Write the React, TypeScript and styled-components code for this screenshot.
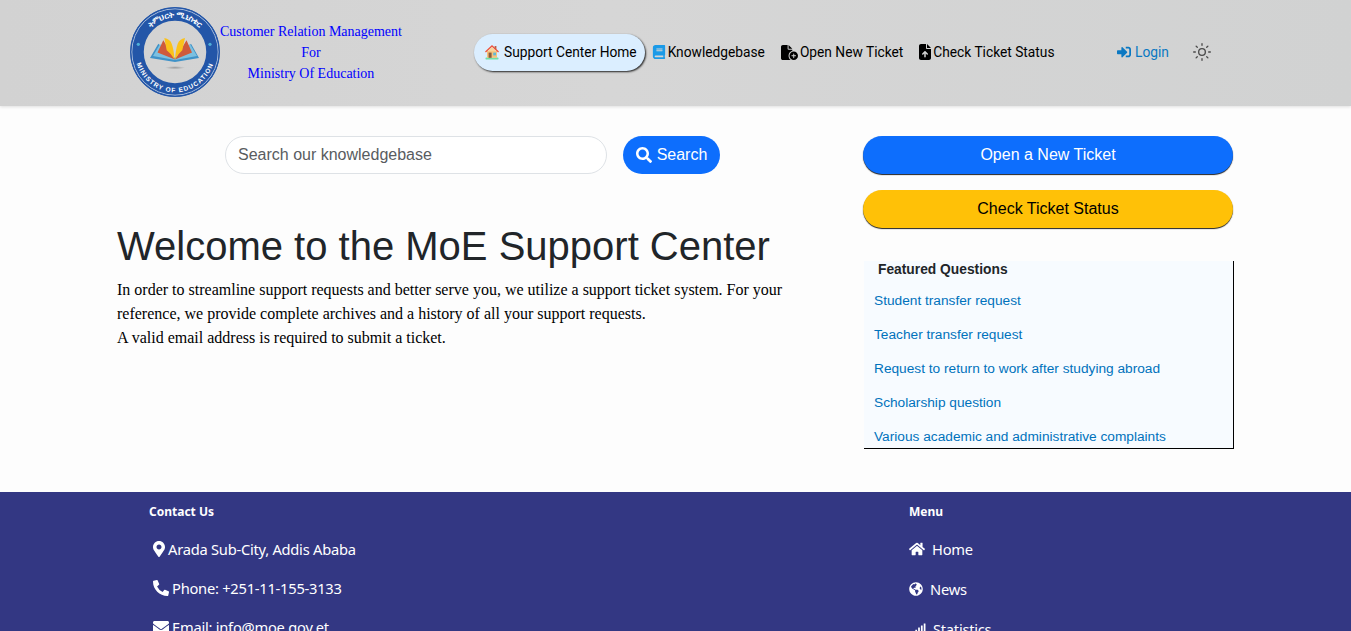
import React from "react";
import styled, { createGlobalStyle } from "styled-components";
import {
    FaBook,
    FaEnvelope,
    FaGlobeAmericas,
    FaHome,
    FaMapMarkerAlt,
    FaPhoneAlt,
    FaSearch,
    FaSignal,
    FaSignInAlt,
} from "react-icons/fa";
import { FaFileArrowUp, FaFileCirclePlus } from "react-icons/fa6";
import { Sun } from "lucide-react";

const GlobalStyle = createGlobalStyle`
    html, body {
        margin: 0;
        height: 100%;
        overflow: hidden;
    }
    body {
        background: #fdfdfd;
        font-family: "Liberation Sans", Arial, sans-serif;
    }
`;

const Page = styled.div`
    height: 100vh;
    overflow: hidden;
`;

const Header = styled.header`
    height: 106px;
    display: flex;
    align-items: center;
    padding: 0 0 2px 129px;
    box-sizing: border-box;
    background: linear-gradient(90deg, #d2d2d2, #d6d6d6 45%, #d1d2d2);
    box-shadow: 0 1px 3px rgba(0, 0, 0, 0.12);
`;

const Brand = styled.div`
    display: flex;
    align-items: center;
    width: 345px;
    flex: none;
`;

const BrandText = styled.div`
    width: 182px;
    margin-left: -1px;
    text-align: center;
    color: #0000ff;
    font-family: "Liberation Serif", "Times New Roman", serif;
    font-size: 14px;
    line-height: 21px;
`;

const Nav = styled.nav`
    display: flex;
    align-items: center;
    font-family: Roboto, sans-serif;
    font-size: 13.75px;
    color: #000;
    width: 643px;
    flex: none;
`;

const NavItem = styled.a<{ $active?: boolean }>`
    display: flex;
    align-items: center;
    gap: ${(p) => (p.$active ? "4px" : "3px")};
    height: 37px;
    box-sizing: border-box;
    white-space: nowrap;
    padding: 0 8px 0 ${(p) => (p.$active ? "10px" : "8px")};
    border-radius: 20px;
    background: ${(p) => (p.$active ? "#dbeeff" : "transparent")};
    box-shadow: ${(p) => (p.$active ? "1px 1px 2px #222" : "none")};
    svg {
        flex: none;
    }
`;

const BookIcon = styled(FaBook)`
    margin: 0 -1px;
`;

const NewTicketIcon = styled(FaFileCirclePlus)`
    margin-right: -1px;
`;

const StatusIcon = styled(FaFileArrowUp)`
    margin: 0 -3px 0 -2px;
`;

const LoginLink = styled.a`
    display: flex;
    align-items: center;
    gap: 4px;
    color: #0a78c2;
    font-family: Roboto, sans-serif;
    font-size: 13.75px;
`;

const ThemeToggle = styled.span`
    display: flex;
    margin-left: 23px;
    color: #4a4a4a;
`;

const Main = styled.main`
    height: 386px;
    display: grid;
    grid-template-columns: 711px 370px;
    column-gap: 35px;
    padding: 30px 0 0 117px;
    box-sizing: border-box;
`;

const SearchRow = styled.form`
    display: flex;
    justify-content: center;
    gap: 16px;
`;

const SearchInput = styled.input`
    width: 382px;
    height: 38px;
    box-sizing: border-box;
    border: 1px solid #dee2e6;
    border-radius: 19px;
    padding: 0 12px;
    background: #fff;
    font-family: "Liberation Sans", Arial, sans-serif;
    font-size: 16px;
    &::placeholder {
        color: #595c5f;
        opacity: 1;
    }
`;

const SearchButton = styled.button`
    width: 97px;
    height: 38px;
    display: flex;
    align-items: center;
    justify-content: center;
    gap: 5px;
    border: 0;
    border-radius: 19px;
    background: #0d6efd;
    color: #fff;
    font-family: "Liberation Sans", Arial, sans-serif;
    font-size: 16px;
`;

const Title = styled.h1`
    margin: 48px 0 0;
    font-size: 40px;
    line-height: 48px;
    font-weight: 400;
    color: #212529;
`;

const Intro = styled.p`
    margin: 8px 0 0;
    font-family: "Liberation Serif", "Times New Roman", serif;
    font-size: 16px;
    line-height: 24px;
    color: #000;
`;

const Side = styled.aside`
    display: flex;
    flex-direction: column;
`;

const ActionButton = styled.a<{ $tone: "blue" | "yellow" }>`
    height: 38px;
    margin-bottom: 16px;
    display: flex;
    align-items: center;
    justify-content: center;
    border-radius: 19px;
    font-size: 16px;
    background: ${(p) => (p.$tone === "blue" ? "#0d6efd" : "#ffc107")};
    color: ${(p) => (p.$tone === "blue" ? "#fff" : "#000")};
    box-shadow: 0 1px 1px #222;
`;

const Featured = styled.section`
    margin: 17px -1px 0 1px;
    height: 188px;
    box-sizing: border-box;
    overflow: hidden;
    background: #f7fbff;
    border-right: 1px solid #000;
    border-bottom: 1px solid #000;
    padding: 1px 0 0 10px;
`;

const FeaturedTitle = styled.h2`
    margin: 0 0 15px 4px;
    font-size: 13.8px;
    line-height: 16px;
    font-weight: 700;
    color: #212529;
`;

const QuestionLink = styled.a`
    display: block;
    font-size: 13.7px;
    line-height: 16px;
    margin-bottom: 18px;
    color: #0072bc;
`;

const Footer = styled.footer`
    height: 139px;
    overflow: hidden;
    display: grid;
    grid-template-columns: 760px 1fr;
    padding: 11px 0 0 149px;
    box-sizing: border-box;
    background: #333783;
    color: #fff;
    font-family: "Noto Sans", sans-serif;
`;

const FooterHeading = styled.h3`
    margin: 0 0 16px;
    font-size: 12px;
    line-height: 18px;
    font-weight: 700;
`;

const FooterRow = styled.div<{ $gap?: number }>`
    display: flex;
    align-items: center;
    gap: ${(p) => p.$gap ?? 3}px;
    height: 24px;
    margin: 0 0 15px 4px;
    font-size: 14.7px;
    letter-spacing: -0.25px;
    white-space: nowrap;
`;

const MenuRow = styled(FooterRow)`
    margin-left: 0;
    margin-bottom: 16px;
`;

const MarkerIcon = styled(FaMapMarkerAlt)`
    margin-left: -2px;
`;

const SignalIcon = styled(FaSignal)`
    margin-left: 3px;
`;

function HouseIcon() {
    return (
        <svg width="16" height="16" viewBox="0 0 16 16">
            <rect x="1.5" y="13.6" width="13" height="1.8" rx="0.6" fill="#72e0a6" />
            <path d="M3 7h10v6.8H3z" fill="#f6c27c" />
            <rect x="10.6" y="2" width="1.8" height="3.5" fill="#b5654a" />
            <path d="M8 1 1 7.6l.9 1L8 3.1l6.1 5.5.9-1z" fill="#ee5340" />
            <path d="M8 3.1 3.4 7.3h9.2z" fill="#f9d59d" />
            <rect x="4.6" y="8.6" width="3" height="5.2" fill="#8a5a3c" />
            <rect x="9.2" y="8.6" width="2.8" height="2.8" fill="#62b8d8" />
        </svg>
    );
}

function MoeLogo() {
    return (
        <svg width="92" height="92" viewBox="0 0 92 92" style={{ flex: "none" }}>
            <defs>
                <path id="arcTop" d="M11.5 46a34.5 34.5 0 0 1 69 0" />
                <path id="arcBottom" d="M6.5 40a40 40 0 1 0 79 0" />
                <radialGradient id="shade">
                    <stop offset="0" stopColor="#9c9c9c" />
                    <stop offset="1" stopColor="#d2d2d2" />
                </radialGradient>
            </defs>
            <circle cx="46" cy="46" r="38" fill="none" stroke="#2356a8" strokeWidth="13.5" />
            <circle cx="46" cy="46" r="43.2" fill="none" stroke="#dfe6f0" strokeWidth="0.7" />
            <circle cx="46" cy="46" r="44.4" fill="none" stroke="#2356a8" strokeWidth="1" />
            <circle cx="9.3" cy="38.3" r="1.6" fill="#4fb0d8" />
            <circle cx="81" cy="38.3" r="1.6" fill="#4fb0d8" />
            <text fontFamily="'Noto Sans', sans-serif" fontSize="8" fontWeight="700" fill="#fff">
                <textPath href="#arcTop" startOffset="50%" textAnchor="middle">
                    ትምህርት ሚኒስቴር
                </textPath>
            </text>
            <text fontFamily="'Liberation Sans', sans-serif" fontSize="6.5" fontWeight="700" fill="#fff" letterSpacing="1">
                <textPath href="#arcBottom" startOffset="50%" textAnchor="middle">
                    MINISTRY OF EDUCATION
                </textPath>
            </text>
            <path d="M21 52 29.3 37.7 46 52 62 37.7 70 52 46 56z" fill="#3f92c8" />
            <path d="M24 50 31 38 46 53 61 38 68 50 46 54z" fill="#7cc0e0" />
            <path d="M28.5 46.5 34.3 34.3 45.5 52.7 46.5 52.7 57.5 34.3 63 46.5 46 53.5z" fill="#cf5a3c" />
            <path d="M35.3 32Q41 33 42.7 37.7 45 44 45.4 53.3 42 47.5 37.7 44.3z" fill="#fbc21a" />
            <path d="M56 32Q50.5 33 48.7 37.7 46.5 44 46.1 53.3 49.5 47.5 53.3 44.3z" fill="#fbc21a" />
            <ellipse cx="46" cy="61.7" rx="10" ry="1.6" fill="url(#shade)" />
        </svg>
    );
}

const QUESTIONS = [
    "Student transfer request",
    "Teacher transfer request",
    "Request to return to work after studying abroad",
    "Scholarship question",
    "Various academic and administrative complaints",
];

export default function App() {
    return (
        <Page>
            <GlobalStyle />
            <Header>
                <Brand>
                    <MoeLogo />
                    <BrandText>
                        Customer Relation Management
                        <br />
                        For
                        <br />
                        Ministry Of Education
                    </BrandText>
                </Brand>
                <Nav>
                    <NavItem $active>
                        <HouseIcon />
                        Support Center Home
                    </NavItem>
                    <NavItem>
                        <BookIcon size={14} color="#1a9ae8" />
                        Knowledgebase
                    </NavItem>
                    <NavItem>
                        <NewTicketIcon size={17} />
                        Open New Ticket
                    </NavItem>
                    <NavItem>
                        <StatusIcon size={16} />
                        Check Ticket Status
                    </NavItem>
                </Nav>
                <LoginLink>
                    <FaSignInAlt size={14} />
                    Login
                </LoginLink>
                <ThemeToggle>
                    <Sun size={20} strokeWidth={1.6} />
                </ThemeToggle>
            </Header>
            <Main>
                <div>
                    <SearchRow>
                        <SearchInput placeholder="Search our knowledgebase" />
                        <SearchButton type="button">
                            <FaSearch size={16} />
                            Search
                        </SearchButton>
                    </SearchRow>
                    <Title>Welcome to the MoE Support Center</Title>
                    <Intro>
                        In order to streamline support requests and better serve you, we utilize a support ticket
                        system. For your reference, we provide complete archives and a history of all your support
                        requests.
                        <br />
                        A valid email address is required to submit a ticket.
                    </Intro>
                </div>
                <Side>
                    <ActionButton $tone="blue">Open a New Ticket</ActionButton>
                    <ActionButton $tone="yellow">Check Ticket Status</ActionButton>
                    <Featured>
                        <FeaturedTitle>Featured Questions</FeaturedTitle>
                        {QUESTIONS.map((q) => (
                            <QuestionLink key={q}>{q}</QuestionLink>
                        ))}
                    </Featured>
                </Side>
            </Main>
            <Footer>
                <div>
                    <FooterHeading>Contact Us</FooterHeading>
                    <FooterRow $gap={1}>
                        <MarkerIcon size={16} />
                        Arada Sub-City, Addis Ababa
                    </FooterRow>
                    <FooterRow>
                        <FaPhoneAlt size={16} />
                        Phone: +251-11-155-3133
                    </FooterRow>
                    <FooterRow>
                        <FaEnvelope size={16} />
                        Email: info@moe.gov.et
                    </FooterRow>
                </div>
                <div>
                    <FooterHeading>Menu</FooterHeading>
                    <MenuRow $gap={7}>
                        <FaHome size={16} />
                        Home
                    </MenuRow>
                    <MenuRow $gap={7}>
                        <FaGlobeAmericas size={14} />
                        News
                    </MenuRow>
                    <MenuRow $gap={7}>
                        <SignalIcon size={14} />
                        Statistics
                    </MenuRow>
                </div>
            </Footer>
        </Page>
    );
}
